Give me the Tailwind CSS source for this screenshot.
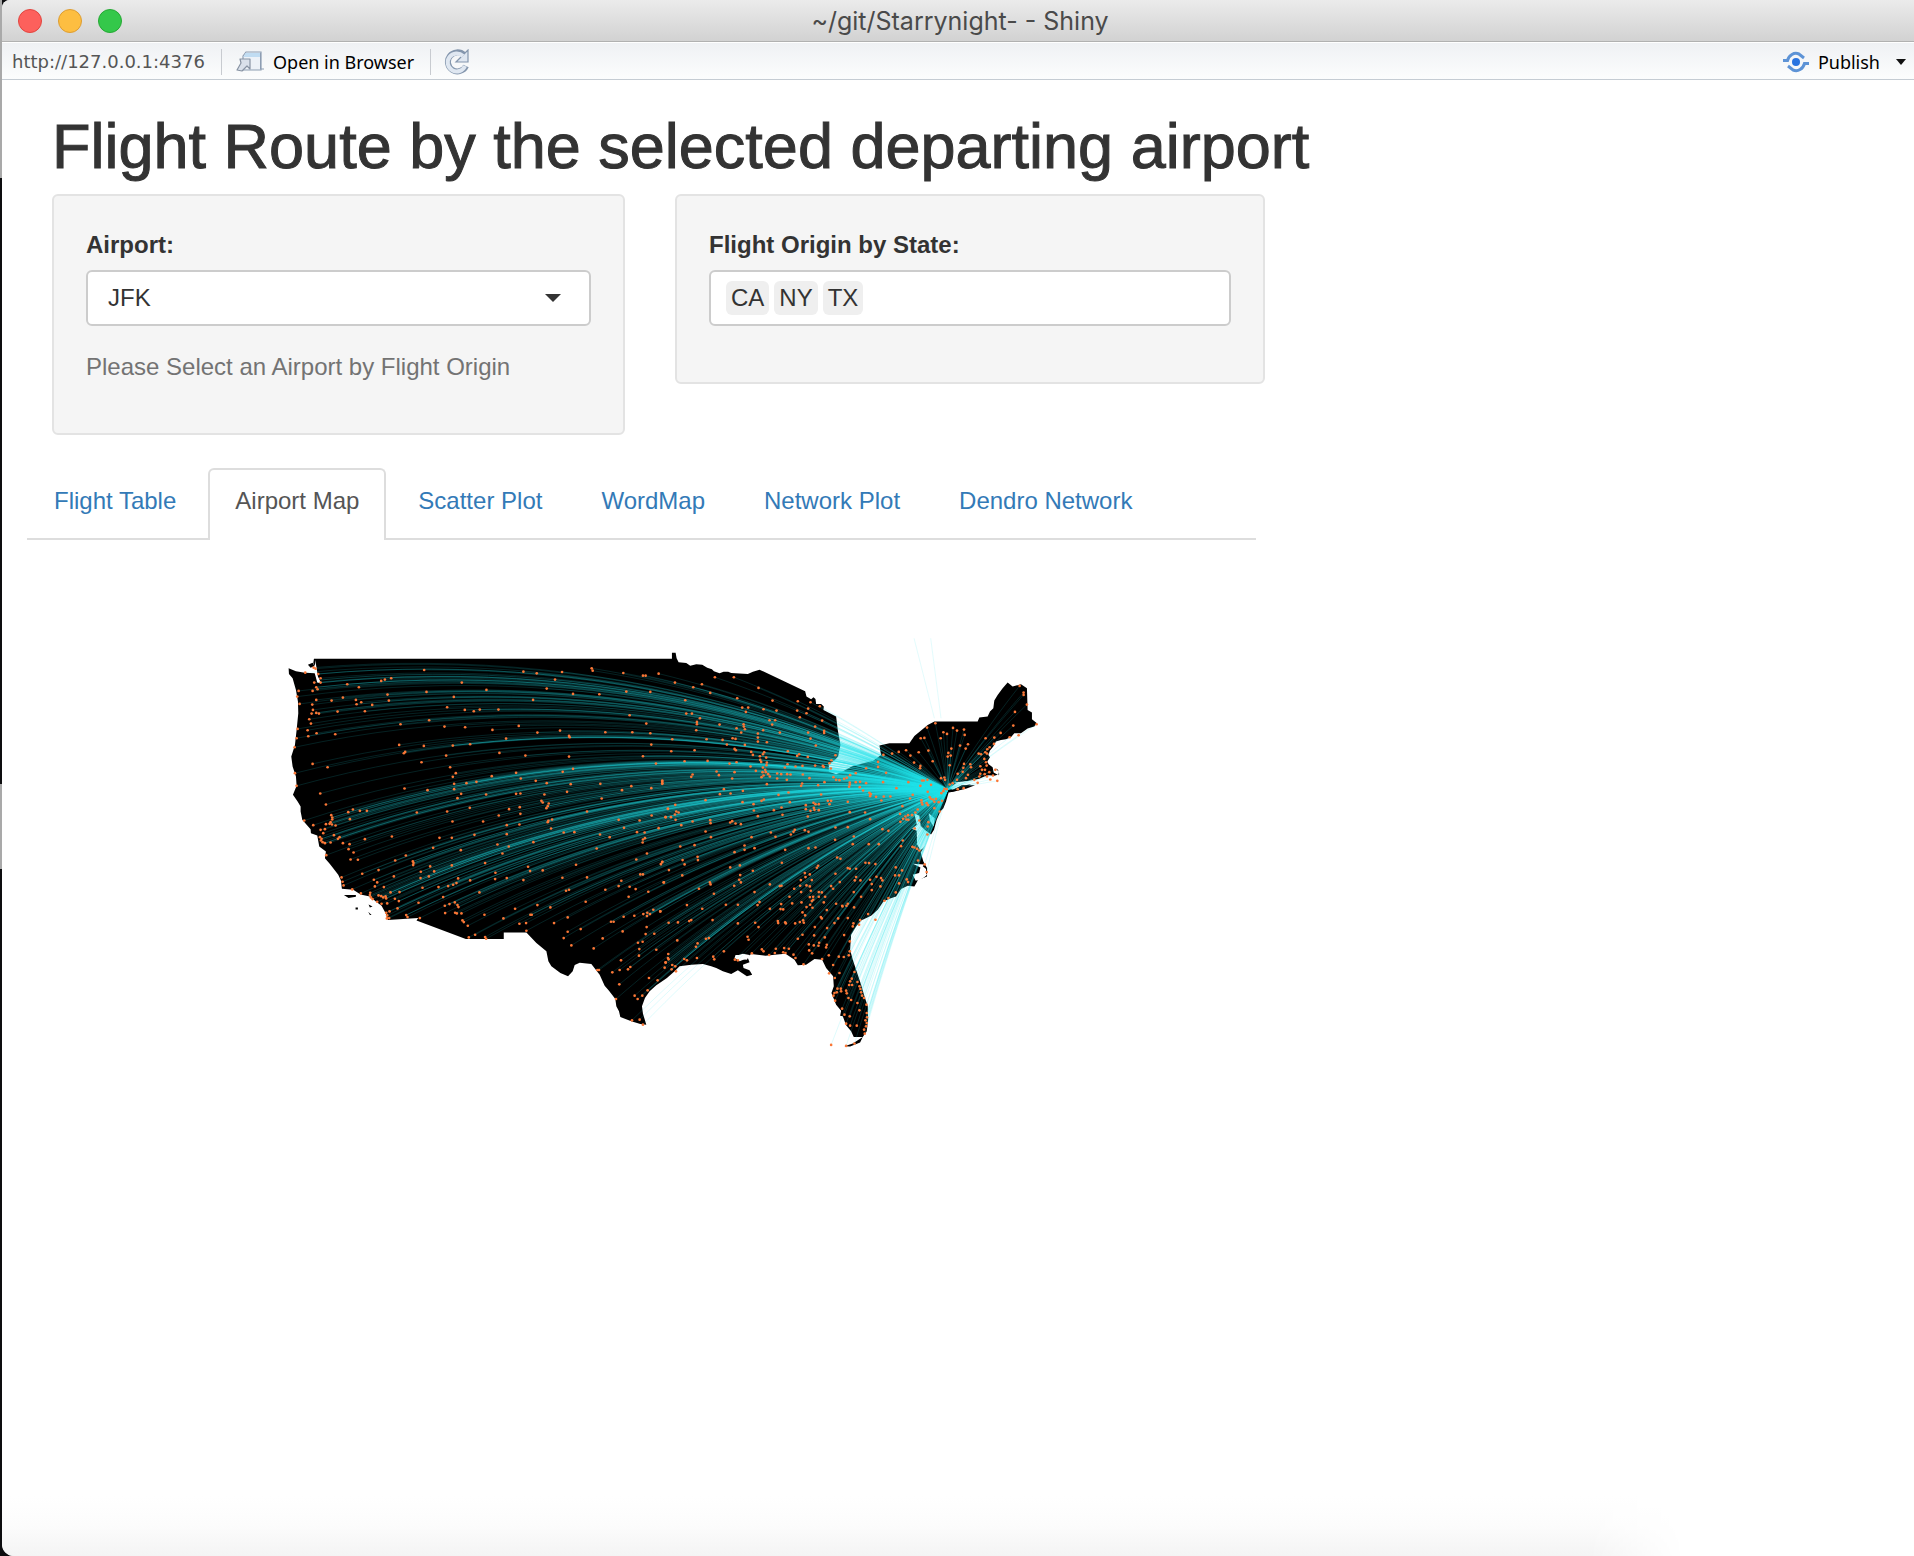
<!DOCTYPE html>
<html lang="en">
<head>
<meta charset="utf-8">
<title>~/git/Starrynight- - Shiny</title>
<script src="https://cdn.jsdelivr.net/npm/@tailwindcss/browser@4"></script>
</head>
<body class="bg-[#0d0d0f]">
<div class="relative flex min-h-screen flex-col pl-[2px]">
  <div class="absolute left-0 top-0 h-[178px] w-[2px] bg-[#a9a9a9]" aria-hidden="true"></div>
  <div class="absolute left-0 top-[784px] h-[85px] w-[2px] bg-[#a9a9a9]" aria-hidden="true"></div>
  <div class="flex grow flex-col overflow-hidden rounded-tl-lg rounded-bl-xl bg-white">

    <header class="grid h-[42px] shrink-0 grid-cols-[1fr_auto_1fr] items-center border-b border-[#b1b1b1] bg-linear-to-b from-[#ebebeb] to-[#d2d2d2] px-4">
      <div class="flex gap-4">
        <button type="button" aria-label="Close" class="size-6 rounded-full border border-[#e2453f] bg-[#fd605c]"></button>
        <button type="button" aria-label="Minimize" class="size-6 rounded-full border border-[#dd9d32] bg-[#fdbe41]"></button>
        <button type="button" aria-label="Zoom" class="size-6 rounded-full border border-[#26a934] bg-[#34c84a]"></button>
      </div>
      <span class="pl-1 font-['Inter','Roboto',sans-serif] text-[25px] leading-8 text-[#4a4a4a]">~/git/Starrynight- - Shiny</span>
    </header>

    <nav class="flex h-[38px] shrink-0 items-center border-t border-b border-t-white border-b-[#c5ccd3] bg-linear-to-b from-[#eff1f4] to-[#fcfdfd] pt-px pr-2 pl-[10px] font-['Noto_Sans','Open_Sans',sans-serif] text-[18px] leading-6 text-black">
      <span class="w-[196px] font-['DejaVu_Sans',sans-serif] text-[#555]">http://127.0.0.1:4376</span>
      <span class="mx-[13px] h-[26px] w-px bg-[#c8cbd0]"></span>
      <button type="button" class="flex items-center gap-2">
        <svg class="h-6 w-[30px]" viewBox="0 0 30 24" fill="none"><path d="M8 6 11 2h15v18H8z" fill="#edf2f8" stroke="#8d9db2" stroke-width="1.2"/><path d="M10.500 3h15v4h-17z" fill="#c0dcf2"/><path d="M25.500 3v16H29" stroke="#8d9db2"/><path d="M5 9h10v10l-3-3-5 5-5-1 4-7z" fill="#d9e0ea" stroke="#8893a3" stroke-width="1.2" stroke-linejoin="round"/></svg>
        Open in Browser
      </button>
      <span class="mr-[13px] ml-4 h-[26px] w-px bg-[#c8cbd0]"></span>
      <button type="button" aria-label="Refresh">
        <svg class="size-[26px]" viewBox="0 0 26 26" fill="none" stroke-linecap="butt"><path d="M22 17a9.500 9.500 0 1 1-2-11" stroke="#8496ad" stroke-width="6"/><path d="M24 1v12H12l4-4z" fill="#dfe7f1" stroke="#8496ad" stroke-width="1.200"/><path d="M21 17a9 9 0 1 1-2-10" stroke="#dfe7f1" stroke-width="4"/></svg>
      </button>
      <button type="button" class="ml-auto flex items-center gap-2">
        <svg class="h-6 w-7" viewBox="0 0 28 24" fill="none" stroke="#5d93d6" stroke-width="3"><circle cx="14" cy="12" r="4" fill="#2a74e0" stroke="none"/><path d="M1 10.500h4.500C7 5 12 2 17 4l5 4"/><path d="M27 13.500h-4.500C21 19 16 22 11 20l-5-4"/></svg>
        Publish
        <svg class="ml-2 h-[6px] w-[10px]" viewBox="0 0 10 6"><path d="M0 0h10L5 6z" fill="#111"/></svg>
      </button>
    </nav>

    <main class="grow pt-8 font-['Liberation_Sans',Arial,sans-serif] text-[24px] leading-[34px] text-[#333]">
      <h1 class="px-[50px] text-[63px] leading-[68px] [-webkit-text-stroke:1px_#333]">Flight Route by the selected departing airport</h1>

      <form class="mt-[14px] grid grid-cols-[573fr_590fr_549fr] items-start gap-x-[50px] px-[50px]">
        <div class="rounded-md border-2 border-[#e3e3e3] bg-[#f5f5f5] px-8 pt-8 pb-[49px]">
          <label for="airport" class="block font-bold">Airport:</label>
          <div class="relative mt-2">
            <select id="airport" class="block h-14 w-full appearance-none rounded-md border-2 border-[#ccc] bg-white px-5 text-[24px]"><option>JFK</option></select>
            <svg class="pointer-events-none absolute top-6 right-[30px] h-2 w-4" viewBox="0 0 16 8"><path d="M0 0h16L8 8z" fill="#333"/></svg>
          </div>
          <p class="mt-6 text-[#737373]">Please Select an Airport by Flight Origin</p>
        </div>
        <div class="rounded-md border-2 border-[#e3e3e3] bg-[#f5f5f5] px-8 pt-8 pb-14">
          <label for="states" class="block font-bold">Flight Origin by State:</label>
          <div class="mt-2 flex h-14 items-center gap-[5px] rounded-md border-2 border-[#ccc] bg-white px-[15px]">
            <span class="rounded-md bg-[#efefef] px-[5px]">CA</span>
            <span class="rounded-md bg-[#efefef] px-[5px]">NY</span>
            <span class="rounded-md bg-[#efefef] px-[5px]">TX</span>
            <input id="states" type="text" class="min-w-0 grow outline-none">
          </div>
        </div>
      </form>

      <section class="mx-[25px] mt-[33px]">
        <div class="w-[66%]">
          <div class="flex gap-[5px] border-b-2 border-[#ddd] text-[#337ab7]" role="tablist">
            <a href="#table" role="tab" class="px-[27px] pt-4 pb-5">Flight Table</a>
            <a href="#map" role="tab" aria-selected="true" class="-mb-[2px] rounded-t-md border-2 border-b-0 border-[#ddd] bg-white px-[25px] pt-[14px] pb-[22px] text-[#555]">Airport Map</a>
            <a href="#scatter" role="tab" class="px-[27px] pt-4 pb-5">Scatter Plot</a>
            <a href="#words" role="tab" class="px-[27px] pt-4 pb-5">WordMap</a>
            <a href="#network" role="tab" class="px-[27px] pt-4 pb-5">Network Plot</a>
            <a href="#dendro" role="tab" class="px-[27px] pt-4 pb-5">Dendro Network</a>
          </div>
          <svg class="mx-auto mt-[90px] block w-2/3" viewBox="-114 0 2460 1290" role="img" aria-label="Flight routes from JFK">
            <path id="mainland" fill="#000"/>
            <path d="M114 104l14-6 6 10-12 5zM222 796h36v5l-22 4zM257 833h7v6h-7zM296 824l12 6-8 3zM295 846l10 10h-5zM1725 1250l25-8 30-20-8 17-30 12zM2037 488l40-22h40l-25 10-40 10z" fill="#000"/>
            <path d="M1935 550l7 35-14 12 14 6 1 40 10 18 8-6 20-22 5-18-20-15-12-12-4-30zM1978 550l18 15-3 25-10-15zM1930 702l35 2-10 10zM1930 735l35-10 8 10-12 10-22 8zM1400 978l20-6 20 4-8 14-25-3zM2055 458l85-10-70 18zM136 90l8 50 10 20-12-2-8-30z" fill="#fff"/>
            <g id="routes" fill="none" stroke="#20e0e8" stroke-width="3"></g>
            <g id="airports" fill="#fb7736"></g>
          </svg>
        </div>
      </section>
    </main>

    <div class="h-[60px] shrink-0 bg-linear-to-b from-white via-[#fcfcfc] to-[#f4f4f4] [mask-image:linear-gradient(to_right,black_83%,transparent_88%)]"></div>
  </div>
</div>
<script>
// Coastline and border, clockwise: eastern half from Minnesota to Texas, then the west.
const coastEast = `37,86 37,68 48,68 51,85 57,97 80,99 92,107 110,103 128,104 143,113 157,118 163,124 180,130 192,125 206,125 215,129 265,132 280,125 300,119 437,184 441,200 455,208 462,202 468,207 470,222 485,222 493,230 492,240 530,260 535,300 543,345 536,380 525,392 508,402 508,425 530,433 545,427 580,408 640,393 665,375 660,347 690,340 750,340 765,318 805,285 825,275 955,275 960,263 985,260 992,245 1002,235 1005,212 1015,195 1030,175 1045,158 1060,170 1085,163 1103,175 1105,240 1118,248 1118,268 1133,280 1125,290 1105,296 1085,310 1065,310 1055,322 1040,328 1025,330 1010,335 1002,350 992,362 987,375 992,382 984,395 988,403 1000,412 1003,428 1018,436 1018,425 1008,415 1016,420 1020,433 1005,438 988,436 975,440 960,447 940,451 915,456 890,460 868,475 880,479 910,468 935,463 915,475 895,482 868,487 860,515 852,535 843,545 832,570 824,600 805,630 792,655 784,668 792,695 803,715 803,740 785,747 800,738 800,718 785,705 778,735 765,742 775,752 765,770 745,768 725,778 710,800 690,807 672,815 655,840 635,858 605,872 590,890 575,915 572,960 580,990 595,1035 605,1065 615,1100 625,1130 626,1170 622,1205 610,1222 583,1222 575,1205 560,1187 550,1160 542,1158 545,1143 530,1125 516,1090 523,1070 521,1040 500,1015 488,990 465,988 440,1005 415,1007 405,990 378,972 345,975 318,978 300,976 275,973 258,985 240,976 228,976 225,985 240,995 265,985 270,998 250,1005 252,1015 270,1022 278,1035 262,1040 235,1022 215,1033 190,1025 170,1015 155,1010 130,1003 95,1005 60,1010 45,1025 22,1045 0,1060`;
const coastWest = `1160,1067 1140,1085 1126,1105 1117,1130 1120,1152 1130,1185 1112,1183 1085,1175 1052,1162 1048,1145 1040,1130 1037,1108 1018,1083 1005,1068 990,1035 965,1003 930,999 915,1006 909,1025 895,1040 872,1030 845,1010 836,995 830,965 800,940 770,908 702,908 702,928 588,928 440,872 445,865 354,871 347,850 335,828 318,815 300,800 272,794 250,780 216,777 213,752 205,735 180,703 165,685 168,665 148,650 142,617 123,610 122,598 97,570 92,545 92,530 83,515 69,495 80,468 78,440 68,410 64,380 75,345 80,300 85,250 84,215 78,180 68,145 57,132 56,115 78,124 105,128 135,130 140,115 130,100 132,86`;
// Airport positions on the map, listed by half.
const west = `463,120 761,125 801,130 877,126 966,115 969,122 1061,129 1120,137 1128,137 1167,131 856,149 576,158 364,145 345,149 334,153 232,163 267,172 353,194 357,212 470,186 552,201 650,180 831,176 910,192 989,193 1070,185 1142,186 790,210 86,183 82,200 89,222 106,128 131,113 137,116 145,132 152,145 152,158 139,172 143,178 128,183 133,158 139,210 127,224 129,240 125,251 139,249 147,251 185,212 219,203 258,210 274,217 260,223 307,225 285,244 203,245 532,232 585,240 612,244 630,239 686,239 478,271 392,283 524,290 586,292 668,300 747,288 803,308 871,302 898,318 900,322 1007,307 1088,307 1080,256 1130,281 1142,310 1145,344 118,268 123,281 113,301 115,319 140,310 196,313 83,297 80,325 74,352 388,345 462,348 549,347 601,343 709,326 689,369 767,377 898,380 1120,379 1159,401 402,370 406,366 529,377 455,397 541,412 558,430 549,441 553,462 553,478 590,460 620,456 666,439 739,429 753,446 798,453 831,460 879,426 910,417 903,463 992,462 1057,481 1085,469 1145,475 1178,455 1178,462 128,402 173,412 75,430 80,468 151,491 168,524 404,476 473,481 574,492 563,505 649,494 739,492 752,491 824,494 892,486 996,506 952,545 1195,537 815,513 819,518 837,521 834,529 830,535 718,538 750,532 752,552 687,557 600,534 532,545 441,548 548,575 640,575 711,586 749,584 836,573 847,569 834,577 844,596 882,608 914,607 1047,570 1063,594 1110,572 1146,557 1188,562 1102,607 1125,608 1167,595 1126,625 1120,629 1119,638 1020,622 991,614 981,656 791,637 614,615 546,624 509,624 366,620 285,628 239,643 204,627 209,622 192,616 249,539 235,547 270,543 291,543 240,568 184,556 187,563 187,569 182,577 179,582 186,584 197,587 168,583 130,586 103,572 165,598 152,600 160,610 150,622 155,627 153,632 158,637 165,640 182,638 219,640 236,658 251,668 242,689 264,690 169,676 490,654 573,661 683,644 717,650 698,671 711,613 408,677 376,692 429,695 431,700 430,706 481,710 493,725 453,726 452,745 477,740 546,707 646,700 677,729 676,748 711,745 775,711 781,724 761,751 819,722 878,744 919,705 952,743 1100,689 1132,671 1178,697 1174,703 1112,734 1120,734 1055,753 1047,769 1080,771 1098,778 1007,780 1077,801 1136,786 1183,758 898,780 889,783 948,816 842,833 803,826 736,837 629,788 601,752 565,746 560,760 550,765 535,769 506,772 458,774 520,802 446,819 372,740 326,721 277,732 215,743 218,756 221,767 312,750 322,758 315,770 342,772 362,788 389,787 247,779 273,791 301,789 300,796 303,803 308,808 326,797 334,799 340,803 347,800 349,806 335,822 322,816 352,821 375,807 387,814 383,836 359,845 349,849 352,857 358,865 351,866 409,856 413,862 450,865 525,828 539,823 555,818 563,826 566,832 526,850 556,849 561,851 575,851 578,872 582,877 594,888 597,923 616,915 646,922 649,927 644,855 701,866 749,882 769,880 782,855 786,855 770,903 853,880 894,863 894,906 882,925 933,898 905,947 999,926 972,956 1024,876 1032,876 1062,861 1094,858 1121,853 1133,849 1141,853 1132,859 1151,840 1172,845 1059,905 1131,892 1128,913 1154,912 1105,939 1119,936 1109,958 1108,978 1160,960 1054,992 1050,1021 1028,1028 1075,1019 1082,1012 983,1021 988,1021 1049,1064 1039,1108 1087,1172 1110,1170 1120,1185 1104,1108 1095,1098 1118,1098 1134,1082 1138,1045 1164,1052 1188,998 1195,985`;
const east = `46,158 101,172 127,163 166,142 223,142 152,189 297,174 77,211 233,205 339,212 415,214 453,217 481,229 80,251 97,251 121,265 112,276 112,283 110,301 248,233 266,233 259,246 312,238 351,242 330,271 347,271 338,284 413,242 446,236 441,250 421,262 488,272 494,303 494,309 467,290 446,308 453,326 469,347 180,284 231,295 252,283 253,290 256,298 245,308 295,311 295,323 311,301 322,337 361,308 38,328 141,328 189,330 202,344 219,325 228,327 225,357 229,361 256,345 295,335 35,364 105,361 75,394 144,393 210,401 231,397 171,425 178,436 225,427 218,446 99,434 95,441 8,452 8,460 273,410 275,366 280,375 301,379 314,367 310,373 320,383 302,390 305,396 322,398 321,406 310,413 317,420 309,427 319,427 312,437 326,433 306,442 331,440 289,423 322,463 385,364 419,373 413,378 445,381 384,403 376,413 408,410 429,408 353,431 365,433 383,433 393,434 353,446 382,450 430,434 450,445 428,461 425,468 476,466 493,411 510,400 516,391 528,376 514,416 490,408 467,407 495,457 485,494 387,488 357,495 313,509 306,513 282,523 283,542 193,478 213,491 181,493 250,483 249,517 218,574 212,578 228,581 244,583 138,511 47,525 25,537 57,548 50,545 46,554 18,562 34,562 48,570 65,586 99,575 152,571 153,580 138,605 154,622 276,622 334,608 348,621 369,555 343,541 295,559 366,533 391,517 439,526 439,538 453,543 445,560 462,519 468,523 478,523 463,534 465,540 478,541 505,513 515,513 510,523 522,442 530,450 540,451 554,447 562,444 572,436 589,430 571,458 571,464 569,471 589,457 602,456 620,460 601,472 611,482 630,489 634,493 632,499 650,501 673,500 693,500 666,512 565,516 571,547 617,548 620,415 656,396 656,411 680,429 671,457 711,475 672,375 698,371 718,366 740,361 753,377 778,367 807,362 820,394 764,398 783,408 782,415 747,457 795,324 784,325 803,293 828,280 863,312 852,307 844,325 881,294 893,302 914,299 916,315 902,347 919,356 926,343 876,356 867,369 874,377 865,380 871,406 788,452 793,452 804,450 815,465 783,468 845,445 855,443 857,450 871,464 855,477 862,478 852,484 846,490 805,486 760,495 752,506 729,529 786,511 787,518 789,524 802,520 806,526 814,507 821,509 830,507 825,516 838,517 848,513 811,502 825,535 841,545 775,539 768,548 758,556 746,556 738,560 731,567 741,569 747,570 722,552 723,576 780,572 807,577 805,590 804,614 766,596 669,598 687,603 632,568 565,592 528,593 583,620 580,643 628,643 658,643 527,630 725,649 730,632 759,651 765,653 773,657 780,662 776,692 796,704 802,727 742,749 746,757 709,713 707,737 719,737 728,722 719,761 709,788 618,699 629,700 648,703 565,715 571,717 590,717 590,742 586,752 603,752 632,750 651,741 665,745 669,752 637,763 637,781 663,770 605,801 583,787 584,833 565,822 561,828 530,822 548,828 549,830 528,732 533,683 543,687 515,769 521,777 541,757 468,653 447,655 377,660 367,699 476,708 472,714 436,730 451,734 438,742 424,751 457,751 404,777 422,768 425,787 441,767 451,770 454,783 390,801 365,823 398,821 363,838 371,839 426,818 451,802 457,814 461,801 461,810 478,801 478,787 487,788 497,801 493,818 452,825 459,834 441,832 429,848 437,857 431,872 433,879 421,877 407,881 355,874 356,880 377,878 379,881 484,862 487,866 502,841 525,880 466,892 503,895 496,923 464,917 429,915 415,927 448,944 463,947 477,948 479,939 502,945 500,953 449,962 458,971 447,606 436,601 406,600 402,606 394,614 285,655 255,647 255,660 225,667 105,646 62,650 69,691 75,704 114,681 115,691 8,696 4,703 28,721 68,737 12,758 118,777 151,758 153,764 163,792 241,707 212,713 280,723 242,736 239,750 244,758 224,768 331,764 361,769 366,768 285,787 300,817 294,826 331,837 235,825 199,825 128,837 82,826 2,845 27,879 55,878 89,874 95,871 159,871 235,881 287,879 297,892 264,921 267,930 193,965 148,925 139,927 114,941 109,951 53,932 112,985 74,988 82,992 161,981 164,989 26,973 27,989 18,999 38,1006 47,1010 36,1019 15,1014 49,1025 226,990 235,992 277,971 307,959 312,965 329,976 349,957 346,970 374,955 388,957 371,968 378,970 402,975 408,985 432,1004 488,988 508,977 521,1006 538,981 554,916 553,982 571,935 571,965 568,977 509,1031 540,1030 526,1045 585,1027 577,1047 572,1055 569,1066 578,1066 594,1057 600,1070 603,1078 605,1088 608,1098 614,1105 621,1125 534,1077 544,1077 532,1088 525,1090 522,1098 545,1085 560,1083 562,1091 567,1105 575,1111 527,1113 594,1120 600,1142 548,1137 555,1155 571,1160 560,1182 572,1188 592,1188 622,1150 623,1163 618,1172 622,1180 620,1190 614,1200 616,1212 585,1242 560,1249 515,1246 648,870 626,853 602,871 599,885 582,881 580,890 565,865 536,866 675,813 687,805 1081,168 1093,188 1093,195 1103,224 1067,246 1062,287 1132,283 1078,316 1051,322 1024,309 1005,323 979,325 1004,342 991,352 984,358 978,367 983,371 965,373 958,371 975,387 980,397 963,409 982,407 968,420 977,420 963,432 976,433 990,427 1001,437 983,440 960,440 1008,420 1014,453 993,449 955,459 945,450 926,435 933,403 935,412 914,402 912,414 910,426 895,432 920,445 880,460 913,475 895,478 893,450`;
const parse = (text, shift) => text.split(' ').map(p => p.split(',').map(Number)).map(([x, y]) => [x + shift, y]);
const airports = parse(west, 0).concat(parse(east, 1170));
const outline = parse(coastEast, 1170).concat(parse(coastWest, 0));
document.getElementById('mainland').setAttribute('d', 'M' + outline.join('L') + 'Z');

// Equirectangular scale of the map: JFK sits at (2035, 480).
const rad = Math.PI / 180, home = { lon: -73.78, lat: 40.64 };
const toLonLat = ([x, y]) => [home.lon + (x - 2035) / 38.86, home.lat - (y - 480) / 47.2];
const toXY = (lon, lat) => [2035 + (lon - home.lon) * 38.86, 480 - (lat - home.lat) * 47.2];
const vec = (lon, lat) => [Math.cos(lat * rad) * Math.cos(lon * rad), Math.cos(lat * rad) * Math.sin(lon * rad), Math.sin(lat * rad)];

function route(point) {
  const a = vec(...toLonLat(point)), b = vec(home.lon, home.lat);
  const angle = Math.acos(Math.min(1, a[0] * b[0] + a[1] * b[1] + a[2] * b[2]));
  if (angle < 0.001) return '';
  let d = '';
  for (let i = 0; i <= 24; i++) {
    const t = i / 24, p = Math.sin((1 - t) * angle) / Math.sin(angle), q = Math.sin(t * angle) / Math.sin(angle);
    const v = [0, 1, 2].map(k => a[k] * p + b[k] * q);
    const [x, y] = toXY(Math.atan2(v[1], v[0]) / rad, Math.asin(v[2]) / rad);
    d += (i ? 'L' : 'M') + x.toFixed(1) + ' ' + y.toFixed(1);
  }
  return d;
}
const line = (d, o) => `<path d="${d}" stroke-opacity="${o}"/>`;
// Busy hubs carry several routes, drawn stronger.
const hubs = [[300,800],[330,803],[349,806],[362,788],[155,627],[165,640],[180,582],[187,563],[152,150],[145,132],[152,158],[139,172],[430,700],[429,695],[493,725],[546,707],[553,826],[833,529],[836,573],[553,470],[590,460],[549,347],[1128,857],[1141,853],[1482,380],[1488,425],[1480,406],[1612,800],[1790,1163],[1774,1088],[1120,629],[1195,1000],[383,836],[387,814],[409,856],[1409,575],[629,788],[677,729],[882,608],[914,607],[1047,570],[1125,608],[1230,555],[1215,562],[1120,379],[1159,401],[1280,301],[1420,335],[1309,927],[1235,989],[1178,697],[1284,681],[1322,758]];
const north = ['M1934 25L1995 265', 'M1984 25L2015 265'];
document.getElementById('routes').innerHTML =
  airports.map(p => line(route(p), 0.15)).join('') + hubs.map(p => line(route(p), 0.26)).join('') + north.map(d => line(d, 0.13)).join('');
document.getElementById('airports').innerHTML = airports.map(([x, y]) => `<circle cx="${x}" cy="${y}" r="4"/>`).join('');
</script>
</body>
</html>
